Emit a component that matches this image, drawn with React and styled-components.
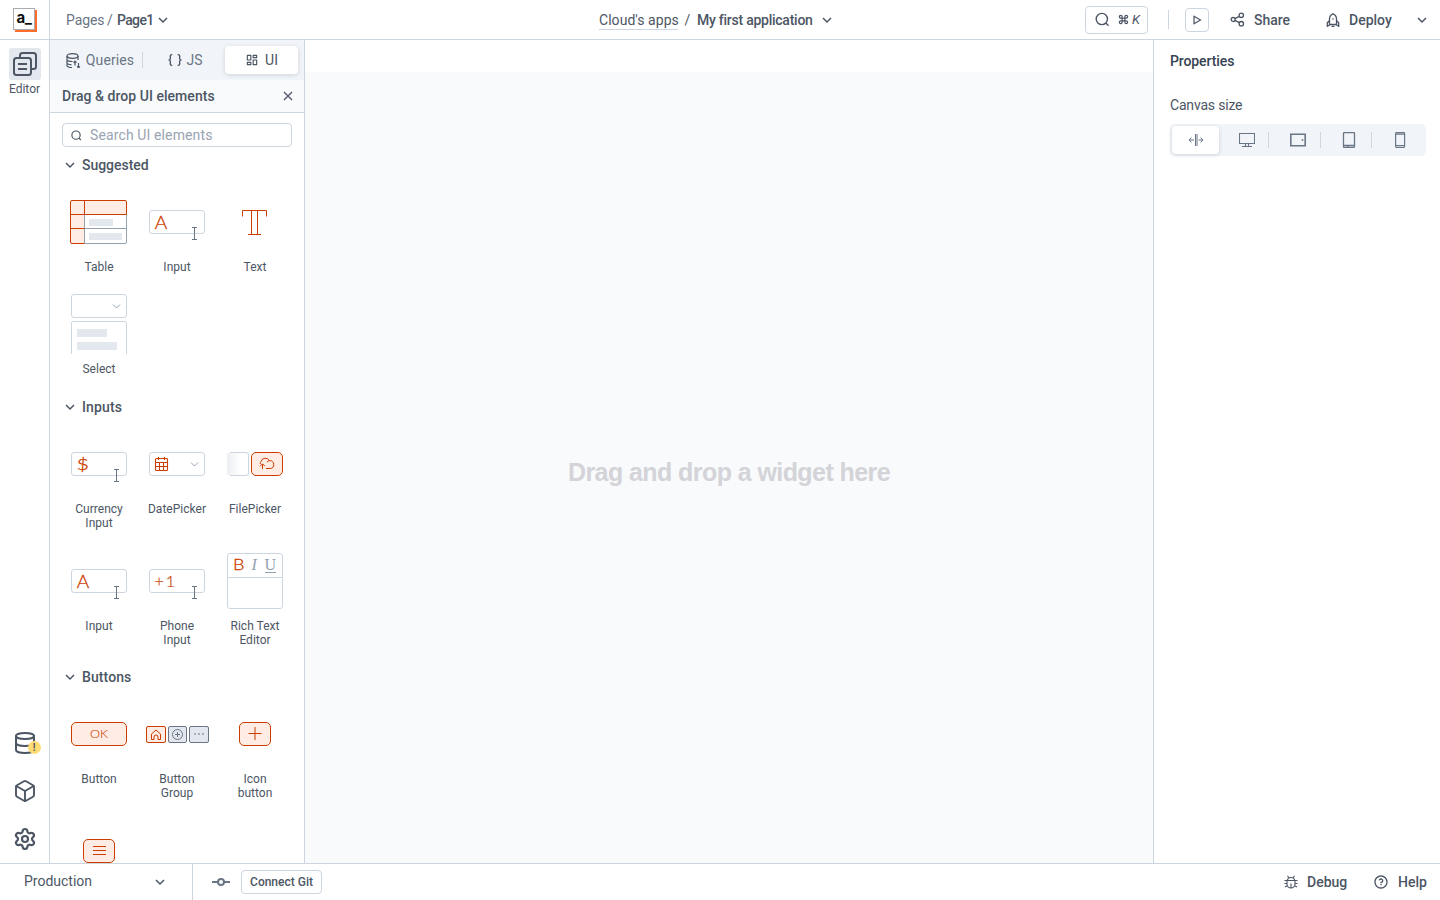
import React from 'react'
import styled, { createGlobalStyle, ThemeProvider } from 'styled-components'
import { Box, Command, Database, Settings } from 'lucide-react'
import { RiBracesLine, RiDashboardLine, RiQuestionLine } from 'react-icons/ri'

const theme = {
  border: '#cdd5df',
  text: '#4c5664',
  strong: '#364252',
  muted: '#6a7585',
  placeholder: '#99a4b3',
  line: '#94a1b1',
  subtle: '#f1f5f9',
  canvas: '#f8fafc',
  fill: '#e3e8ef',
  orange: '#cc3d00',
  peach: '#ffede5',
}

const GlobalStyle = createGlobalStyle`
  * {
    box-sizing: border-box;
  }

  body {
    margin: 0;
    overflow: hidden;
    font-family: Roboto, 'Liberation Sans', sans-serif;
    font-size: 14px;
    color: ${theme.text};
  }

  svg {
    display: block;
    flex: none;
  }
`

const Page = styled.div`
  display: flex;
  flex-direction: column;
  width: 1440px;
  height: 900px;
  background: #fff;
`

const Text = styled.span`
  flex: none;
  width: ${({ $w }) => ($w ? `${$w}px` : 'auto')};
  font-size: ${({ $size }) => $size || 14}px;
  font-weight: ${({ $bold }) => ($bold ? 500 : 400)};
  letter-spacing: ${({ $ls }) => $ls || 0}px;
  line-height: 20px;
  color: ${({ $color, theme }) => theme[$color || 'text']};
  white-space: nowrap;
`

const Header = styled.header`
  display: flex;
  flex: none;
  height: 40px;
  border-bottom: 1px solid ${({ theme }) => theme.border};
`

const LogoCell = styled.div`
  width: 50px;
  padding: 8px 0 0 13px;
  border-right: 1px solid ${({ theme }) => theme.border};
`

const Logo = styled.div`
  width: 22px;
  height: 22px;
  border: 1px solid #a9abad;
  background: #fff;
  box-shadow: 2px 2px 0 #ff6d2d;
  font-family: Inter, sans-serif;
  font-size: 15px;
  font-weight: 700;
  line-height: 17px;
  text-align: center;
  letter-spacing: -0.4px;
  color: #111;
`

const Crumbs = styled.div`
  display: flex;
  align-items: center;
  width: 549px;
  padding-left: 16px;
`

const AppTitle = styled.div`
  display: flex;
  align-items: center;
`

const Workspace = styled(Text)`
  height: 20px;
  border-bottom: 1px solid ${({ theme }) => theme.border};
`

const Separator = styled(Text)`
  text-align: center;
`

const Actions = styled.div`
  display: flex;
  align-items: center;
  margin-left: auto;
  padding-right: ${({ $edge }) => $edge || 12}px;
`

const SearchButton = styled.div`
  display: flex;
  align-items: center;
  gap: 8px;
  width: 63px;
  height: 28px;
  padding-left: 9px;
  border: 1px solid ${({ theme }) => theme.border};
  border-radius: 4px;

  em {
    margin-left: -5px;
    font-size: 13px;
  }
`

const Rule = styled.div`
  width: 1px;
  height: 19px;
  margin: 0 16px 0 20px;
  background: ${({ theme }) => theme.border};
`

const PlayButton = styled.div`
  display: flex;
  align-items: center;
  justify-content: center;
  width: 24px;
  height: 24px;
  margin-right: 21px;
  border: 1px solid ${({ theme }) => theme.border};
  border-radius: 4px;
`

const Action = styled.div`
  display: flex;
  align-items: center;
  gap: 9px;
  margin-right: ${({ $after }) => $after || 0}px;
`

const Main = styled.div`
  display: flex;
  flex: 1;
  min-height: 0;
`

const Sidebar = styled.nav`
  display: flex;
  flex-direction: column;
  align-items: center;
  flex: none;
  width: 50px;
  padding: 8px 0 12px;
  border-right: 1px solid ${({ theme }) => theme.border};
`

const EditorTile = styled.div`
  display: flex;
  align-items: center;
  justify-content: center;
  width: 32px;
  height: 32px;
  border-radius: 3px;
  background: ${({ theme }) => theme.fill};
`

const SidebarBottom = styled.div`
  display: flex;
  flex-direction: column;
  gap: 24px;
  margin-top: auto;
`

const Badged = styled.div`
  position: relative;
`

const Badge = styled.span`
  position: absolute;
  right: -4px;
  bottom: 1px;
  width: 13px;
  height: 13px;
  border-radius: 50%;
  background: #ffdc73;
  font-size: 10px;
  font-weight: 700;
  line-height: 13px;
  text-align: center;
`

const Explorer = styled.aside`
  display: flex;
  flex-direction: column;
  flex: none;
  width: 255px;
  border-right: 1px solid ${({ theme }) => theme.border};
`

const Tabs = styled.div`
  display: flex;
  align-items: center;
  flex: none;
  height: 40px;
  padding-left: 5px;
  background: ${({ theme }) => theme.subtle};
`

const divider = ({ $divider, theme }) =>
  $divider ? `linear-gradient(${theme.border}, ${theme.border}) no-repeat right ${$divider}px center / 1px 16px` : 'none'

const Tab = styled.div`
  display: flex;
  align-items: center;
  justify-content: center;
  gap: ${({ $gap }) => $gap || 5}px;
  width: ${({ $w }) => $w}px;
  height: 28px;
  border-radius: 4px;
  background: ${({ $active, ...p }) => ($active ? '#fff' : divider(p))};
  box-shadow: ${({ $active }) => ($active ? '0 1px 4px rgba(76, 86, 100, 0.22)' : 'none')};
  color: ${({ $active, theme }) => ($active ? theme.text : theme.muted)};
`

const PanelTitle = styled.div`
  display: flex;
  align-items: center;
  justify-content: space-between;
  flex: none;
  height: 33px;
  padding: 0 11px 0 12px;
  border-bottom: 1px solid ${({ theme }) => theme.border};
  background: ${({ theme }) => theme.canvas};
`

const SearchField = styled.div`
  display: flex;
  align-items: center;
  flex: none;
  gap: 8px;
  height: 24px;
  margin: 10px 12px 6px;
  padding-left: 8px;
  border: 1px solid ${({ theme }) => theme.border};
  border-radius: 4px;
`

const WidgetList = styled.div`
  flex: 1;
  min-height: 0;
  overflow: hidden;
`

const Section = styled.section`
  margin-bottom: ${({ $after }) => $after}px;
`

const SectionTitle = styled.div`
  display: flex;
  align-items: center;
  gap: 6px;
  height: 24px;
  margin-bottom: 5px;
  padding-left: 14px;
`

const Grid = styled.div`
  display: grid;
  grid-template-columns: repeat(3, 78px);
  padding-left: 10px;
`

const Card = styled.div`
  display: flex;
  flex-direction: column;
  align-items: center;
  height: ${({ $tall }) => ($tall ? 117 : 102)}px;
  padding-top: 10px;
`

const Thumb = styled.div`
  display: flex;
  align-items: center;
  justify-content: center;
  height: 60px;
  margin-bottom: 8px;
`

const CardLabel = styled.div`
  font-size: 12px;
  line-height: 14.4px;
  letter-spacing: 0.02px;
  text-align: center;
  white-space: pre;
`

const Canvas = styled.main`
  display: flex;
  flex: 1;
  align-items: center;
  justify-content: center;
  margin-top: 32px;
  padding-top: 9px;
  background: ${({ theme }) => theme.canvas};
`

const Hint = styled.div`
  font-family: 'Liberation Sans', Arial, sans-serif;
  font-size: 25px;
  font-weight: 700;
  letter-spacing: -0.57px;
  color: #d3d3d8;
`

const Properties = styled.aside`
  display: flex;
  flex-direction: column;
  flex: none;
  width: 287px;
  padding: 11px 14px 0 16px;
  border-left: 1px solid ${({ theme }) => theme.border};
`

const CanvasLabel = styled(Text)`
  margin: 24px 0 9px;
`

const Segments = styled.div`
  display: flex;
  gap: 4px;
  height: 32px;
  padding: 2px;
  border-radius: 5px;
  background: ${({ theme }) => theme.subtle};
`

const Segment = styled(Tab)`
  flex: 1;
  width: auto;
`

const Footer = styled.footer`
  display: flex;
  align-items: center;
  flex: none;
  height: 37px;
  border-top: 1px solid ${({ theme }) => theme.border};
`

const Environment = styled.div`
  display: flex;
  align-items: center;
  justify-content: space-between;
  width: 193px;
  height: 100%;
  padding: 0 26px 0 24px;
  border-right: 1px solid ${({ theme }) => theme.border};
`

const EnvironmentName = styled(Text)`
  margin-bottom: 3px;
`

const EditorLabel = styled(Text)`
  margin-top: -1px;
`

const GitButton = styled.div`
  display: flex;
  align-items: center;
  justify-content: center;
  width: 81px;
  height: 24px;
  margin-left: 11px;
  border: 1px solid ${({ theme }) => theme.border};
  border-radius: 4px;
`

const GitIcon = styled.div`
  margin-left: 19px;
`

const Icon = ({ w = 16, h = w, color = theme.text, sw = 1.3, children }) => (
  <svg width={w} height={h} viewBox={`0 0 ${w} ${h}`} fill="none" stroke={color} strokeWidth={sw}>
    {children}
  </svg>
)

const Chevron = () => (
  <Icon w={12} sw={1.5}><path d="M2 4l4 4 4-4" /></Icon>
)

const SearchIcon = ({ size = 15, sw = 1.5 }) => (
  <svg width={size} height={size} viewBox="0 0 16 16" fill="none" stroke={theme.text} strokeWidth={sw}>
    <circle cx="7.3" cy="7.5" r="6" />
    <path d="M11.6 11.8l2.8 2.8" />
  </svg>
)

// thumbnails
const light = { fontFamily: 'Lato, sans-serif', fontWeight: 300, fill: theme.orange, strokeWidth: 0.3 }
const serif = { fontFamily: "'Liberation Serif', serif", fontSize: 16, fill: theme.line, stroke: 'none' }

const InputThumb = ({ children }) => (
  <Icon w={56} h={36} sw={1} color={theme.orange}>
    <g transform="translate(0 6)">
      <rect x=".5" y=".5" width="55" height="23" rx="2.5" stroke={theme.border} />
      {children}
      <path d="M43 17.5h5M43 29.5h5M45.5 17.5v12" stroke={theme.muted} />
    </g>
  </Icon>
)

const LetterInput = () => (
  <InputThumb>
    <text x="5.7" y="18.5" fontSize="17.5" {...light} textLength="12.5" lengthAdjust="spacingAndGlyphs">A</text>
  </InputThumb>
)

const CurrencyThumb = () => (
  <InputThumb>
    <text x="5.5" y="18" fontSize="16" {...light} textLength="12.5" lengthAdjust="spacingAndGlyphs">$</text>
  </InputThumb>
)

const PhoneThumb = () => (
  <InputThumb>
    <text x="5.5" y="18" fontSize="16" {...light} strokeWidth="0.2" textLength="20.5">+1</text>
  </InputThumb>
)

const TableThumb = () => (
  <Icon w={58} h={44} sw={1}>
    <path d="M.5 .5h56v14h-42v29H.5z" fill={theme.peach} stroke="none" />
    <path d="M14.5 43.5H55a1.5 1.5 0 0 0 1.5-1.5V14.5M14.5 28.5h42M14.5 15v28.5" stroke={theme.line} />
    <rect x="19" y="19" width="24" height="7" rx=".5" fill={theme.fill} stroke="none" />
    <rect x="19" y="33" width="33" height="7" rx=".5" fill={theme.fill} stroke="none" />
    <path d="M14.5 43.5H2A1.5 1.5 0 0 1 .5 42V2A1.5 1.5 0 0 1 2 .5h53A1.5 1.5 0 0 1 56.5 2v12.5H.5M14.5 .5v14M.5 28.5h14" stroke={theme.orange} />
  </Icon>
)

const TextThumb = () => (
  <Icon w={26} h={26} color={theme.orange} sw={1}>
    <path d="M.5 7.5v-6h24v6M9.5 1.5v24M15.5 1.5v24M6 25.5h13" />
  </Icon>
)

const SelectThumb = () => (
  <Icon w={56} h={60} color={theme.border} sw={1}>
    <rect x=".5" y=".5" width="55" height="23" rx="2.5" />
    <path d="M42 10.5l3.5 3.5 3.5-3.5" stroke={theme.line} />
    <path d="M.5 60V29A1.5 1.5 0 0 1 2 27.5h52A1.5 1.5 0 0 1 55.5 29v31" />
    <rect x="6" y="35" width="30" height="8" fill={theme.fill} stroke="none" />
    <rect x="6" y="48" width="40" height="8" fill={theme.fill} stroke="none" />
  </Icon>
)

const DateThumb = () => (
  <Icon w={56} h={24} color={theme.orange} sw={1.1}>
    <rect x=".5" y=".5" width="55" height="23" rx="2.5" stroke={theme.border} strokeWidth="1" />
    <path d="M42 10.5l3.5 3.5 3.5-3.5" stroke={theme.line} strokeWidth="1" />
    <rect x="6.5" y="6.5" width="12" height="12" rx="1" />
    <path d="M6.5 10.5h12M6.5 14.5h12M10.5 10.5v8M14.5 10.5v8M9.5 5v3M15.5 5v3" />
  </Icon>
)

const FileThumb = () => (
  <Icon w={56} h={24} color={theme.orange} sw={1}>
    <defs>
      <linearGradient id="fade">
        <stop offset="0" stopColor="#eceff3" />
        <stop offset="1" stopColor="#fff" />
      </linearGradient>
    </defs>
    <rect x="0" y="1" width="14" height="22" fill="url(#fade)" stroke="none" />
    <path d="M3 .5h16A2.5 2.5 0 0 1 21.5 3v18a2.5 2.5 0 0 1-2.5 2.5H3" stroke={theme.border} />
    <rect x="24.5" y=".5" width="31" height="23" rx="4.5" fill={theme.peach} />
    <path d="M33.2 12a3.4 3.4 0 0 1 .8-2.5 4.6 4.6 0 0 1 8.5-.8 3.9 3.9 0 1 1 .7 7.8H39M40 10.2a3.3 3.3 0 0 1 2.5-1.5M35.5 17v-5M33 14.3l2.5-2.5 2.5 2.5" />
  </Icon>
)

const RichThumb = () => (
  <Icon w={56} h={56} color={theme.border} sw={1}>
    <rect x=".5" y=".5" width="55" height="55" rx="2.5" />
    <path d="M.5 24.5h55" />
    <text x="6" y="17" fontSize="16" {...light} stroke={theme.orange} textLength="11.5" lengthAdjust="spacingAndGlyphs">B</text>
    <text x="24.5" y="17" fontStyle="italic" {...serif}>I</text>
    <text x="37.5" y="17" {...serif}>U</text>
    <path d="M38 19.5h11" stroke={theme.line} />
  </Icon>
)

const ButtonThumb = () => (
  <Icon w={56} h={24} color={theme.orange} sw={1}>
    <rect x=".5" y=".5" width="55" height="23" rx="4.5" fill={theme.peach} />
    <text x="19" y="16" fontSize="12.5" {...light} strokeWidth="0.1" textLength="18" lengthAdjust="spacingAndGlyphs">OK</text>
  </Icon>
)

const ButtonGroupThumb = () => (
  <Icon w={64} h={18} color={theme.muted} sw={1}>
    <rect x="1.5" y="1.5" width="19" height="16" rx="1.5" fill={theme.peach} stroke={theme.orange} />
    <path d="M6.5 14.5V9L11 5l4.5 4v5.5H13V12a2 2 0 0 0-4 0v2.5z" stroke={theme.orange} />
    <rect x="23.5" y="1.5" width="18" height="16" rx="1.5" fill={theme.fill} />
    <circle cx="32.5" cy="9.5" r="5" />
    <path d="M32.5 7v5M30 9.5h5" />
    <rect x="44.5" y="1.5" width="19" height="16" rx="1.5" fill={theme.fill} />
    <path d="M49 9h2M53 9h2M57 9h2" />
  </Icon>
)

const IconButtonThumb = () => (
  <Icon w={32} h={24} color={theme.orange} sw={1}>
    <rect x=".5" y=".5" width="31" height="23" rx="4.5" fill={theme.peach} />
    <path d="M9.5 11.5h13M16 5v13" />
  </Icon>
)

const MenuThumb = () => (
  <Icon w={32} h={24} color={theme.orange} sw={1}>
    <rect x=".5" y=".5" width="31" height="23" rx="4.5" fill={theme.peach} />
    <path d="M10 7.5h13M10 11.5h13M10 15.5h13" />
  </Icon>
)

const sections = [
  {
    title: 'Suggested', ls: -0.03, after: 9, tall: false,
    items: [['Table', TableThumb], ['Input', LetterInput], ['Text', TextThumb], ['Select', SelectThumb]],
  },
  {
    title: 'Inputs', ls: 0.15, after: 7, tall: true,
    items: [
      ['Currency\nInput', CurrencyThumb], ['DatePicker', DateThumb], ['FilePicker', FileThumb],
      ['Input', LetterInput], ['Phone\nInput', PhoneThumb], ['Rich Text\nEditor', RichThumb],
    ],
  },
  {
    title: 'Buttons', ls: 0.1, after: 0, tall: true,
    items: [
      ['Button', ButtonThumb], ['Button\nGroup', ButtonGroupThumb], ['Icon\nbutton', IconButtonThumb],
      ['', MenuThumb],
    ],
  },
]

const devices = [
  <Icon w={16} sw={1} color={theme.muted}><path d="M7.5 2v12M9 2v12M6 8H1M3.5 5.5L1 8l2.500 2.500M10.500 8H15M12.500 5.500L15 8l-2.500 2.500" /></Icon>,
  <Icon w={16} sw={1.1} color={theme.muted}><path d="M.5 1.5h15v10H.5zM6.5 11.5v3M9.5 11.5v3M3 14.5h10" /></Icon>,
  <Icon w={16} sw={1.6} color={theme.muted}><path d="M.8 2.3h14.4v11.4H.8z" /><path d="M12.5 7.2v1.6" /></Icon>,
  <Icon w={16} sw={1.3} color={theme.muted}><rect x="2.5" y=".6" width="11" height="14.8" rx=".8" /><path d="M3 13.5h10M7 13.5V15" /></Icon>,
  <Icon w={16} sw={1.2} color={theme.muted}><rect x="3.6" y=".6" width="9" height="14.8" rx=".8" /><path d="M4 2.2h8M4 13.5h8" /></Icon>,
]

export default function App() {
  return (
    <ThemeProvider theme={theme}>
      <GlobalStyle />
      <Page>
        <Header>
          <LogoCell><Logo>a_</Logo></LogoCell>
          <Crumbs>
            <Text $w={41} $color="muted" $ls={-0.1}>Pages</Text>
            <Text $w={10} $color="muted">/</Text>
            <Text $w={40} $bold $ls={-0.65}>Page1</Text>
            <Chevron />
          </Crumbs>
          <AppTitle>
            <Workspace $w={79} $ls={0.05}>Cloud's apps</Workspace>
            <Separator $w={19}>/</Separator>
            <Text $w={124} $bold $ls={-0.25}>My first application</Text>
            <Chevron />
          </AppTitle>
          <Actions>
            <SearchButton>
              <SearchIcon />
              <Command size={11} strokeWidth={2.6} />
              <em>K</em>
            </SearchButton>
            <Rule />
            <PlayButton>
              <Icon w={12} sw={1.2}><path d="M3 2.2v7.6L9.5 6z" /></Icon>
            </PlayButton>
            <Action $after={34}>
              <Icon w={15}>
                <circle cx="3.2" cy="7.5" r="2" />
                <circle cx="11.3" cy="3.3" r="2.2" />
                <circle cx="11.3" cy="11.7" r="2.2" />
                <path d="M5 6.6l4.2-2.2M5 8.4l4.2 2.2" />
              </Icon>
              <Text $w={38} $bold>Share</Text>
            </Action>
            <Action $after={23}>
              <Icon w={14}>
                <path d="M3.5 11.5V6C3.5 3.5 5 1.6 7 .8c2 .8 3.5 2.7 3.5 5.2v5.500zM3.500 7.500L1.300 9.800v3.500l3-1.800M10.500 7.500l2.200 2.300v3.500l-3-1.800M5.500 13.300h3" />
                <circle cx="7" cy="6" r=".8" fill={theme.text} stroke="none" />
              </Icon>
              <Text $w={44} $bold>Deploy</Text>
            </Action>
            <Chevron />
          </Actions>
        </Header>
        <Main>
          <Sidebar>
            <EditorTile>
              <Icon w={26} sw={2}>
                <path d="M8 6V4.5A2.5 2.5 0 0 1 10.5 2h11A2.5 2.5 0 0 1 24 4.5v11a2.5 2.5 0 0 1-2.5 2.5H20" />
                <rect x="2" y="7" width="17" height="17" rx="2.5" />
                <path d="M6 13h9M6 18h9" />
              </Icon>
            </EditorTile>
            <EditorLabel $size={12}>Editor</EditorLabel>
            <SidebarBottom>
              <Badged>
                <Database size={24} strokeWidth={2} />
                <Badge>!</Badge>
              </Badged>
              <Box size={24} strokeWidth={1.9} />
              <Settings size={24} strokeWidth={2.2} />
            </SidebarBottom>
          </Sidebar>
          <Explorer>
            <Tabs>
              <Tab $w={90} $divider={2}>
                <Icon w={15} sw={1.2}>
                  <ellipse cx="6.5" cy="3" rx="5.5" ry="2.3" />
                  <path d="M1 3v9.500c0 1 2 2 5 2.200M12 3v4M1 6.500c0 1.200 2.500 2 5.500 2M1 9.800c0 1 2 1.800 4.500 2M9 12.500V8.200M7.500 9.700L9 8.200l1.500 1.500M12.500 10v4.800M11 13.300l1.500 1.500 1.500-1.500" />
                </Icon>
                <Text $color="muted" $ls={0.1}>Queries</Text>
              </Tab>
              <Tab $w={80} $gap={3}>
                <RiBracesLine size={16} color={theme.text} />
                <Text $color="muted">JS</Text>
              </Tab>
              <Tab $w={73} $active $gap={6}>
                <RiDashboardLine size={14} />
                <Text>UI</Text>
              </Tab>
            </Tabs>
            <PanelTitle>
              <Text $bold $ls={0.04}>Drag &amp; drop UI elements</Text>
              <Icon w={10}><path d="M1 1l8 8M9 1L1 9" /></Icon>
            </PanelTitle>
            <SearchField>
              <SearchIcon size={11} sw={1.7} />
              <Text $color="placeholder" $ls={0.12}>Search UI elements</Text>
            </SearchField>
            <WidgetList>
              {sections.map(({ title, ls, after, tall, items }) => (
                <Section key={title} $after={after}>
                  <SectionTitle>
                    <Chevron />
                    <Text $bold $ls={ls}>{title}</Text>
                  </SectionTitle>
                  <Grid>
                    {items.map(([label, Drawing], i) => (
                      <Card key={i} $tall={tall}>
                        <Thumb><Drawing /></Thumb>
                        <CardLabel>{label}</CardLabel>
                      </Card>
                    ))}
                  </Grid>
                </Section>
              ))}
            </WidgetList>
          </Explorer>
          <Canvas>
            <Hint>Drag and drop a widget here</Hint>
          </Canvas>
          <Properties>
            <Text $bold $color="strong" $ls={-0.1}>Properties</Text>
            <CanvasLabel $ls={-0.18}>Canvas size</CanvasLabel>
            <Segments>
              {devices.map((icon, i) => (
                <Segment key={i} $active={i === 0} $divider={i > 0 && i < 4 ? 1 : 0}>{icon}</Segment>
              ))}
            </Segments>
          </Properties>
        </Main>
        <Footer>
          <Environment>
            <EnvironmentName>Production</EnvironmentName>
            <Chevron />
          </Environment>
          <GitIcon>
            <Icon w={18} h={10} color={theme.muted} sw={2}>
              <circle cx="9" cy="5" r="3" />
              <path d="M0 5h6M12 5h6" />
            </Icon>
          </GitIcon>
          <GitButton><Text $size={12} $bold>Connect Git</Text></GitButton>
          <Actions $edge={11}>
            <Action $after={25}>
              <Icon w={14} sw={1.1}>
                <path d="M3 5.500h8V9a4 4 0 0 1-8 0zM3.500 5.500a3.500 3 0 0 1 7 0M3.500 .8l1.300 2M10.500 .8l-1.300 2M.5 5.500H3M11 5.500h2.500M.5 8.500H3M11 8.500h2.500M1 12l2.300-1.200M13 12l-2.300-1.200M7 8.500V13" />
              </Icon>
              <Text $w={41} $bold>Debug</Text>
            </Action>
            <Action>
              <RiQuestionLine size={16} />
              <Text $w={31} $bold>Help</Text>
            </Action>
          </Actions>
        </Footer>
      </Page>
    </ThemeProvider>
  )
}
